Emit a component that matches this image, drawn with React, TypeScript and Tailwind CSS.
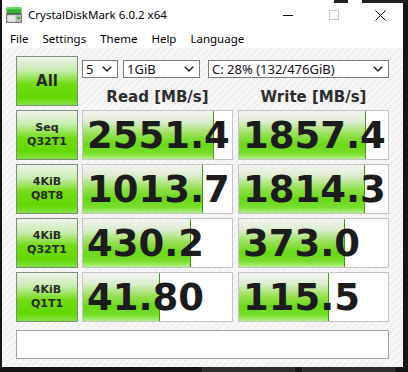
import React from "react";

const rows = [
  { l1: "Seq", l2: "Q32T1", r: "2551.4", rw: 132, w: "1857.4", ww: 128 },
  { l1: "4KiB", l2: "Q8T8", r: "1013.7", rw: 121, w: "1814.3", ww: 127 },
  { l1: "4KiB", l2: "Q32T1", r: "430.2", rw: 109, w: "373.0", ww: 107 },
  { l1: "4KiB", l2: "Q1T1", r: "41.80", rw: 78, w: "115.5", ww: 91 },
];

const Chevron = () => (
  <svg width="10" height="6" viewBox="0 0 10 6" className="shrink-0">
    <polyline points="0.8,0.8 5,5 9.2,0.8" fill="none" stroke="#1a1a1a" strokeWidth="1.4" />
  </svg>
);

const Select = ({ text, w }: { text: string; w: string }) => (
  <div
    className={`${w} h-[18px] bg-white border border-[#7a7a7a] flex items-center justify-between pl-[3px] pr-[5px] text-[13px] leading-none text-[#111] font-['Noto_Sans',sans-serif]`}
  >
    <span>{text}</span>
    <Chevron />
  </div>
);

const Value = ({ v, bw }: { v: string; bw: number }) => (
  <div className="relative w-[151px] h-[50px] bg-white border border-[#c4c4c4] flex items-center overflow-hidden">
    <div
      className="absolute left-0 top-0 bottom-0 border-r border-[#3f9a10] bg-[linear-gradient(to_bottom,#f4f4f4_0%,#dcedd0_22%,#98e056_48%,#6ad818_70%,#78de2e_88%,#b4f08a_100%)]"
      style={{ width: bw - 1 }}
    />
    <span className="relative pl-[4px] text-[37px] leading-[37px] font-bold text-[#1c1c1c] font-['DejaVu_Sans',sans-serif] whitespace-nowrap">
      {v}
    </span>
  </div>
);

const GreenButton = ({ children }: { children: React.ReactNode }) => (
  <div className="w-[62px] h-[50px] shrink-0 border border-[#7d8d7d] bg-[linear-gradient(to_bottom,#eef3ec_0%,#c8ecae_28%,#72dc14_56%,#62d800_84%,#86e244_100%)] flex flex-col items-center justify-center text-[#2a2a2a] font-bold font-['DejaVu_Sans',sans-serif]">
    {children}
  </div>
);

export default function App() {
  return (
    <div className="relative w-[408px] h-[372px] bg-[#161616] overflow-hidden font-['Noto_Sans',sans-serif]">
      <div className="absolute left-[334px] top-0 w-[14px] h-[3px] bg-[#202020]" />
      <div className="absolute left-[362px] top-0 w-[46px] h-[3px] bg-[#202020]" />
      <div className="ml-[2px] w-[401px] h-[367px] bg-white flex flex-col">
        {/* title bar */}
        <div className="h-[30px] flex items-center shrink-0">
          <svg width="16" height="16" viewBox="0 0 16 16" className="ml-[4px]">
            <rect x="0.5" y="0.5" width="15" height="5" fill="#2fae2f" />
            <rect x="0.5" y="0.5" width="15" height="2" fill="#5fd35f" />
            <rect x="0.5" y="5.5" width="15" height="2" fill="#1c7a1c" />
            <rect x="0.5" y="7.5" width="15" height="8" fill="#b8b8b8" stroke="#7a7a7a" strokeWidth="1" />
            <rect x="1.5" y="8.5" width="8" height="6" fill="#e8e8e8" />
            <rect x="11" y="10" width="3" height="2" fill="#2fae2f" />
          </svg>
          <span className="ml-[6px] text-[11.5px] text-black">CrystalDiskMark 6.0.2 x64</span>
          <div className="flex-1" />
          <div className="w-[46px] h-[30px] flex items-center justify-center">
            <div className="w-[10px] h-px bg-black" />
          </div>
          <div className="w-[46px] h-[30px] flex items-center justify-center">
            <div className="w-[10px] h-[10px] border border-[#c6c6c6]" />
          </div>
          <div className="w-[46px] h-[30px] flex items-center justify-center">
            <svg width="11" height="11" viewBox="0 0 11 11">
              <path d="M0.5 0.5 L10.5 10.5 M10.5 0.5 L0.5 10.5" stroke="#000" strokeWidth="1" />
            </svg>
          </div>
        </div>
        {/* menu */}
        <div className="h-[18px] flex items-center pl-[1px] text-[11.5px] text-black shrink-0">
          {["File", "Settings", "Theme", "Help", "Language"].map((m) => (
            <span key={m} className="px-[7px]">
              {m}
            </span>
          ))}
        </div>
        {/* client */}
        <div className="flex-1 pt-[8px] pl-[14px] bg-[repeating-linear-gradient(135deg,#f1f1f1_0px,#f1f1f1_3px,#f9f9f9_3px,#f9f9f9_5px)]">
          <div className="flex">
            <GreenButton>
              <span className="text-[15px] leading-none">All</span>
            </GreenButton>
            <div className="ml-[4px] flex flex-col">
              <div className="mt-[4px] flex">
                <Select text="5" w="w-[36px]" />
                <div className="ml-[5px]">
                  <Select text="1GiB" w="w-[77px]" />
                </div>
                <div className="ml-[8px]">
                  <Select text="C: 28% (132/476GiB)" w="w-[181px]" />
                </div>
              </div>
              <div className="mt-[10px] h-[18px] flex text-[15px] leading-[18px] font-bold text-[#2e2e2e] font-['DejaVu_Sans',sans-serif]">
                <div className="w-[151px] text-center">Read [MB/s]</div>
                <div className="ml-[5px] w-[151px] text-center">Write [MB/s]</div>
              </div>
            </div>
          </div>
          <div className="mt-[4px] flex flex-col gap-[4px]">
            {rows.map((r, i) => (
              <div key={i} className="flex">
                <GreenButton>
                  <span className="text-[11px] leading-[14px]">{r.l1}</span>
                  <span className="text-[11px] leading-[14px]">{r.l2}</span>
                </GreenButton>
                <div className="ml-[4px]">
                  <Value v={r.r} bw={r.rw} />
                </div>
                <div className="ml-[5px]">
                  <Value v={r.w} bw={r.ww} />
                </div>
              </div>
            ))}
          </div>
          <div className="mt-[8px] w-[373px] h-[29px] bg-white border border-[#a4a4a4]" />
        </div>
      </div>
      <div className="h-[5px] flex">
        <div className="ml-[202px] w-[93px] h-[5px] bg-[#2c2c2c] border-x border-[#3a3a3a]" />
        <div className="ml-[7px] w-[93px] h-[5px] bg-[#2c2c2c] border-x border-[#3a3a3a]" />
      </div>
    </div>
  );
}
